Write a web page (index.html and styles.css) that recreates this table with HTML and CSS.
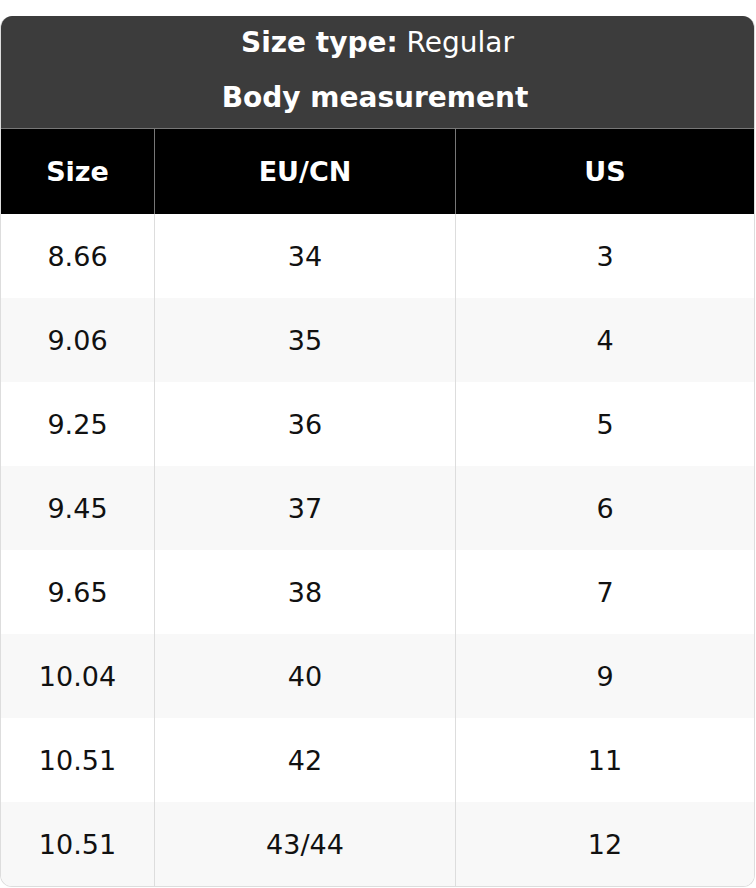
FILE: index.html
```html
<!DOCTYPE html>
<html>
<head>
<meta charset="utf-8">
<link rel="stylesheet" href="styles.css">
</head>
<body>
<div class="card">
  <div class="title">
    <div class="title-line first"><b>Size type:</b> Regular</div>
    <div class="title-line second"><b>Body measurement</b></div>
  </div>
  <table class="chart">
    <thead>
      <tr><th class="c1">Size</th><th class="c2">EU/CN</th><th class="c3">US</th></tr>
    </thead>
    <tbody>
      <tr><td>8.66</td><td>34</td><td>3</td></tr>
      <tr><td>9.06</td><td>35</td><td>4</td></tr>
      <tr><td>9.25</td><td>36</td><td>5</td></tr>
      <tr><td>9.45</td><td>37</td><td>6</td></tr>
      <tr><td>9.65</td><td>38</td><td>7</td></tr>
      <tr><td>10.04</td><td>40</td><td>9</td></tr>
      <tr><td>10.51</td><td>42</td><td>11</td></tr>
      <tr><td>10.51</td><td>43/44</td><td>12</td></tr>
    </tbody>
  </table>
</div>
</body>
</html>
```
FILE: styles.css
```css
html, body {
  margin: 0;
  padding: 0;
  background: #ffffff;
}
body {
  font-family: "DejaVu Sans", "Liberation Sans", sans-serif;
  font-size: 27px;
  color: #111111;
}
.card {
  margin-top: 16px;
  width: 755px;
  box-sizing: border-box;
  border: 1px solid #dddddd;
  border-top: 0;
  border-radius: 12px;
  overflow: hidden;
}
.title {
  background: #3c3c3c;
  color: #ffffff;
  text-align: center;
  font-size: 28px;
  border-bottom: 1px solid #777777;
}
.title-line.first {
  height: 54px;
  line-height: 54px;
}
.title-line.second {
  height: 58px;
  line-height: 56px;
  padding-right: 5px;
}
.chart {
  width: 753px;
  border-collapse: separate;
  border-spacing: 0;
  table-layout: fixed;
}
.chart th, .chart td {
  height: 84px;
  padding: 0;
  text-align: center;
  vertical-align: middle;
}
.chart th {
  height: 85px;
  background: #000000;
  color: #ffffff;
  font-weight: bold;
}
.chart th.c1 { width: 153px; }
.chart th.c2 { width: 300px; }
.chart th + th {
  border-left: 1px solid #777777;
}
.chart td + td {
  border-left: 1px solid #dddddd;
}
.chart tbody tr:nth-child(even) td {
  background: #f8f8f8;
}
```
